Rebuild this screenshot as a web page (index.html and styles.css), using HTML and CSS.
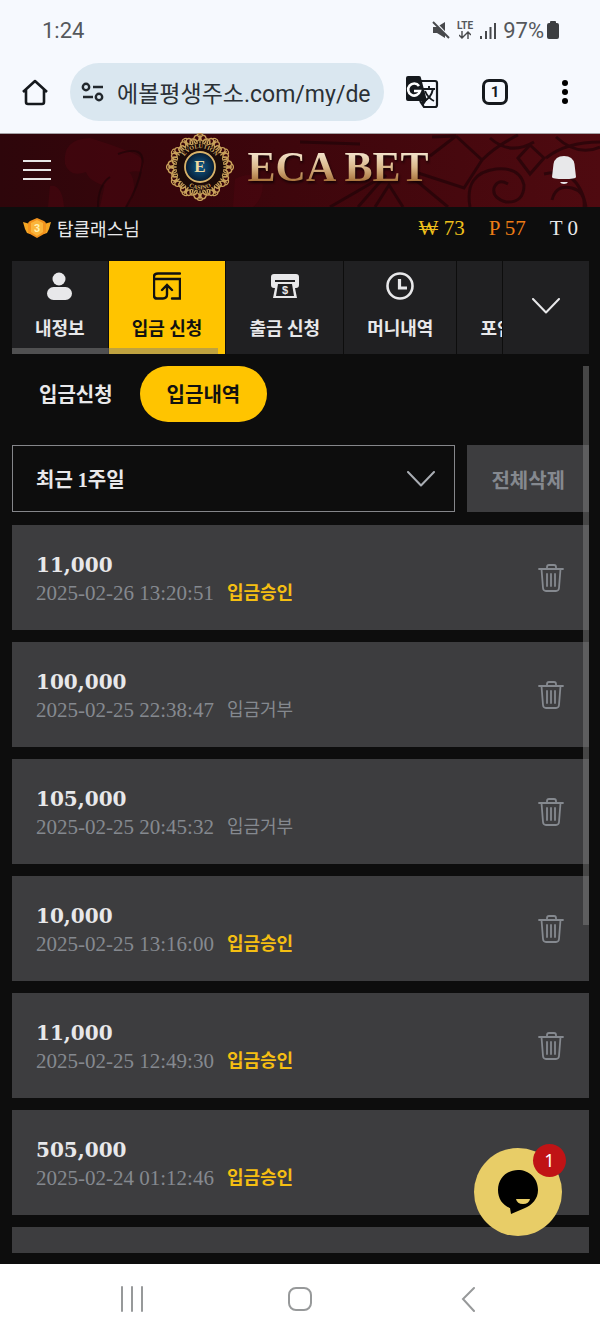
FILE: index.html
```
<!DOCTYPE html>
<html lang="ko">

<head>
    <meta charset="UTF-8">
    <meta name="viewport" content="width=device-width, initial-scale=1.0">
    <title>ECA BET</title>
    <link rel="stylesheet" href="styles.css">
</head>

<body>
    <!-- icons used more than once -->
    <svg width="0" height="0" class="sprite" aria-hidden="true">
        <symbol id="trash" viewBox="0 0 26 28">
            <path d="M1 5h24M9 5V3q0-2 2-2h5q2 0 2 2v2M3.500 5l1.500 19q.3 3 3 3h10q2.700 0 3-3l1.500-19M9 10v12M13 10v12M17 10v12" fill="none" stroke="currentColor" stroke-width="1.800" stroke-linecap="round" />
        </symbol>
        <symbol id="down" viewBox="0 0 28 16">
            <path d="M1 1l13 13.500L27 1" fill="none" stroke="currentColor" stroke-width="2" stroke-linecap="round" stroke-linejoin="round" />
        </symbol>
        <symbol id="flourish" viewBox="0 0 22 13">
            <path d="M11 12V2M11 12C7 12 4 9 5 5s6-3 5 1-4 1-3 0M11 12c4 0 7-3 6-7s-6-3-5 1 4 1 3 0M8 2q3-3 6 0M5 6Q1 5 1 9t4 2M17 6q4-1 4 3t-4 2" fill="none" stroke="#c8a05a" stroke-width="1.300" />
        </symbol>
    </svg>

    <div class="phone-top">
        <div class="status">
            <time>1:24</time>
            <div class="status-icons">
                <svg class="mute" width="18" height="18" viewBox="0 0 18 18">
                    <path d="M1 6h4l8-5v16l-8-5H1z" fill="#47494c" />
                    <path d="M2 0l16 17" stroke="#f6f9fe" stroke-width="2" />
                    <path d="M1 1l16 16" stroke="#47494c" stroke-width="2" />
                </svg>
                <div class="lte">
                    <span>LTE</span>
                    <svg width="12" height="8" viewBox="0 0 12 8">
                        <path d="M3 0v7M0 4l3 3 3-3M9 8V1M6 4l3-3 3 3" fill="none" stroke="#47494c" stroke-width="1.400" />
                    </svg>
                </div>
                <svg width="16" height="17" viewBox="0 0 16 17">
                    <path d="M1 14v3M6 9v8M10.500 5v12M15 1v16" stroke="#47494c" stroke-width="2" />
                </svg>
                <span class="percent">97%</span>
                <svg width="12" height="18" viewBox="0 0 12 18">
                    <path d="M3 2V1q0-1 1-1h4q1 0 1 1v1h1q2 0 2 2v12q0 2-2 2H2q-2 0-2-2V4q0-2 2-2z" fill="#3c3e41" />
                </svg>
            </div>
        </div>
        <div class="browser">
            <button aria-label="Home">
                <svg width="28" height="28" viewBox="0 0 28 28">
                    <path d="M2 14L14 3l12 11M5 12v12q0 2 2 2h14q2 0 2-2V12" fill="none" stroke="#15191d" stroke-width="2.600" stroke-linejoin="round" />
                </svg>
            </button>
            <label class="address">
                <svg width="24" height="20" viewBox="0 0 24 20">
                    <path d="M12 5h10M2 15h10" stroke="#22282d" stroke-width="2.400" />
                    <circle cx="5" cy="5" r="3.200" fill="none" stroke="#22282d" stroke-width="2.400" />
                    <circle cx="18" cy="15" r="3.200" fill="none" stroke="#22282d" stroke-width="2.400" />
                </svg>
                <input type="text" value="에볼평생주소.com/my/de" aria-label="Address">
            </label>
            <div class="browser-tools">
                <button aria-label="Translate">
                    <svg width="34" height="34" viewBox="0 0 34 34">
                        <path d="M15 6h15q2 0 2 2v22q0 2-2 2H19l-4-6" fill="#f6f9fe" stroke="#15191d" stroke-width="2.200" />
                        <path d="M3 1h11q2 0 2 2l6 23H3q-2 0-2-2V3q0-2 2-2zM16 25h6l-4 6z" fill="#15191d" />
                        <path d="M14 11a6 6 0 1 0 1 5H9" fill="none" stroke="#fff" stroke-width="2.600" />
                        <path d="M18 14h12M24 11v3M28 14q-2 9-9 12M20 16q3 7 9 10" fill="none" stroke="#15191d" stroke-width="1.900" />
                    </svg>
                </button>
                <button class="tabs-count" aria-label="Open tabs">1</button>
                <button aria-label="Menu">
                    <svg width="8" height="26" viewBox="0 0 8 26">
                        <circle cx="4" cy="4" r="3" />
                        <circle cx="4" cy="13" r="3" />
                        <circle cx="4" cy="22" r="3" />
                    </svg>
                </button>
            </div>
        </div>
    </div>

    <header class="banner">
        <svg class="pattern" viewBox="0 0 600 73" preserveAspectRatio="xMidYMid slice" aria-hidden="true">
            <defs>
                <linearGradient id="red">
                    <stop offset="0" stop-color="#2e060b" />
                    <stop offset=".3" stop-color="#38050b" />
                    <stop offset=".65" stop-color="#43070d" />
                    <stop offset="1" stop-color="#4f0a10" />
                </linearGradient>
            </defs>
            <path d="M0 0h600v73H0z" fill="url(#red)" />
            <g fill="#4c0610" opacity=".5">
                <path d="M65 30Q62 5 90 4q20 6 40 14 18 6 12 20-20-4-26 16-26-4-30-16-16 6-21-8z" />
                <path d="M105 50q20-28 28-5 4 20-8 28h-25zM50 52q12-2 14 21H48zM235 45q20-10 28 5 0 15-10 23h-20z" />
            </g>
            <g fill="none" stroke="#1b0307" stroke-width="3" opacity=".6">
                <path d="M118 20q28-10 24 12t-16 41M98 73q0-22 12-30" stroke-width="2" />
                <path d="M330 73l52-30M358 73l28-32M375 73l14-22 14 22M412 43l36 30M412 37l52 17 18-28-26-24M430 22l26-20M432 3l24-1M482 26q14-14 36-25M300 8l60 2" />
                <path d="M470 73q-6-34 26-38 24-2 28 16 0 18-18 17-14-4-12-14 4-10 14-4M518 24l12-13 14 13-14 16zM490 4q20 18 44 4M546 24q20-16 54-16M544 40q34-8 42 33M552 66q4-16 20-12 14 4 12 19M556 3q22 20 44 10" />
            </g>
        </svg>
        <button class="hamburger" aria-label="메뉴">
            <svg width="28" height="22" viewBox="0 0 28 22">
                <path d="M0 2h28M0 11h28M0 20h28" stroke="#e8e6e6" stroke-width="2" />
            </svg>
        </button>
        <a class="brand" href="#">
            <svg width="68" height="68" viewBox="0 0 68 68" aria-hidden="true">
                <defs>
                    <radialGradient id="blue">
                        <stop offset="0" stop-color="#0f5c8c" />
                        <stop offset="1" stop-color="#061a30" />
                    </radialGradient>
                    <path id="arcTop" d="M15 34a19 19 0 0 1 38 0" />
                    <path id="arcBottom" d="M11.500 34a22.500 22.500 0 0 0 45 0" />
                </defs>
                <circle cx="34" cy="34" r="27" fill="#1c0a08" />
                <g id="quarter">
                    <use href="#flourish" x="23" y="0" width="22" height="13" />
                    <use href="#flourish" x="23" y="1" width="22" height="13" transform="rotate(30 34 34)" />
                    <use href="#flourish" x="23" y="1" width="22" height="13" transform="rotate(60 34 34)" />
                </g>
                <use href="#quarter" transform="rotate(90 34 34)" />
                <use href="#quarter" transform="rotate(180 34 34)" />
                <use href="#quarter" transform="rotate(270 34 34)" />
                <circle cx="34" cy="34" r="23.500" fill="#1c0a08" />
                <circle cx="34" cy="34" r="15" fill="url(#blue)" stroke="#d8b36a" stroke-width="1.800" />
                <text class="ring"><textPath href="#arcTop" startOffset="50%">EVOLUTION</textPath></text>
                <text class="ring"><textPath href="#arcBottom" startOffset="50%">CASINO</textPath></text>
                <text class="letter" x="34" y="39">E</text>
            </svg>
            <span>ECA BET</span>
        </a>
        <button class="bell" aria-label="알림">
            <svg width="26" height="28" viewBox="0 0 26 28">
                <path d="M13 0q9 0 10.500 8L25 21q0 2-12 2T1 21L2.500 8Q4 0 13 0zM9 26h8q-1 2-4 2t-4-2z" fill="#e8e8ea" />
            </svg>
        </button>
    </header>

    <div class="user">
        <div class="user-name">
            <svg width="28" height="20" viewBox="0 0 28 20">
                <path d="M0 4l7 2v10l-3-1-2-4zM28 4l-7 2v10l3-1 2-4z" fill="#f5a623" />
                <path d="M14 0l7 3q2 1 2 3v7q0 2-2 3l-7 4-7-4q-2-1-2-3V6q0-2 2-3z" fill="#f2921d" />
                <path d="M14 2l6 3v9l-6 4-6-4V5z" fill="#fbb53a" />
                <text class="rank" x="14" y="14">3</text>
            </svg>
            <span>탑클래스님</span>
        </div>
        <ul class="wallet">
            <li class="won">₩ 73</li>
            <li class="point">P 57</li>
            <li>T 0</li>
        </ul>
    </div>

    <main>
        <nav class="menu">
            <div class="menu-scroll">
                <a href="#">
                    <svg width="28" height="28" viewBox="0 0 28 28" fill="currentColor">
                        <circle cx="13" cy="7" r="6.500" />
                        <rect x="1" y="15" width="25" height="13" rx="6.500" />
                    </svg>
                    내정보
                </a>
                <a href="#" class="active">
                    <svg width="28" height="28" viewBox="0 0 28 28" fill="none" stroke="currentColor" stroke-width="2.400" stroke-linecap="round">
                        <path d="M27 1.500H5q-4 0-4 3v19q0 3 3 3h6q4 0 4-4V14M9 18l5-5 5 5M1.500 7H27v19.500h-8" />
                    </svg>
                    입금 신청
                </a>
                <a href="#">
                    <svg width="28" height="28" viewBox="0 0 28 28">
                        <path d="M3 2h22q3 0 3 3v8q0 3-3 3h-1l2 10H2l2-10H3q-3 0-3-3V5q0-3 3-3z" fill="currentColor" />
                        <path d="M4 8h20v2H4zM7 12h14l2 12H5z" fill="#202022" />
                        <text class="dollar" x="14" y="22">$</text>
                    </svg>
                    출금 신청
                </a>
                <a href="#">
                    <svg width="28" height="28" viewBox="0 0 28 28" fill="none" stroke="currentColor" stroke-width="2.600">
                        <circle cx="14" cy="14" r="12.500" />
                        <path d="M13.500 7v9H21" stroke-width="3.200" />
                    </svg>
                    머니내역
                </a>
                <a href="#">
                    <svg width="28" height="28"></svg>
                    포인트
                </a>
            </div>
            <button class="menu-more" aria-label="더보기">
                <svg width="28" height="16"><use href="#down" /></svg>
            </button>
        </nav>

        <section class="content">
            <div class="sub-menu">
                <a href="#">입금신청</a>
                <a href="#" class="active">입금내역</a>
            </div>

            <div class="filter">
                <label class="period">
                    <select aria-label="기간">
                        <option>최근 1주일</option>
                    </select>
                    <svg width="28" height="16"><use href="#down" /></svg>
                </label>
                <button class="delete-all">전체삭제</button>
            </div>

            <ul class="history">
                <li>
                    <div>
                        <strong>11,000</strong>
                        <p><time>2025-02-26 13:20:51</time><span class="ok">입금승인</span></p>
                    </div>
                    <button aria-label="삭제"><svg width="26" height="28"><use href="#trash" /></svg></button>
                </li>
                <li>
                    <div>
                        <strong>100,000</strong>
                        <p><time>2025-02-25 22:38:47</time><span>입금거부</span></p>
                    </div>
                    <button aria-label="삭제"><svg width="26" height="28"><use href="#trash" /></svg></button>
                </li>
                <li>
                    <div>
                        <strong>105,000</strong>
                        <p><time>2025-02-25 20:45:32</time><span>입금거부</span></p>
                    </div>
                    <button aria-label="삭제"><svg width="26" height="28"><use href="#trash" /></svg></button>
                </li>
                <li>
                    <div>
                        <strong>10,000</strong>
                        <p><time>2025-02-25 13:16:00</time><span class="ok">입금승인</span></p>
                    </div>
                    <button aria-label="삭제"><svg width="26" height="28"><use href="#trash" /></svg></button>
                </li>
                <li>
                    <div>
                        <strong>11,000</strong>
                        <p><time>2025-02-25 12:49:30</time><span class="ok">입금승인</span></p>
                    </div>
                    <button aria-label="삭제"><svg width="26" height="28"><use href="#trash" /></svg></button>
                </li>
                <li>
                    <div>
                        <strong>505,000</strong>
                        <p><time>2025-02-24 01:12:46</time><span class="ok">입금승인</span></p>
                    </div>
                </li>
                <li></li>
            </ul>
            <div class="scrollbar"></div>
        </section>

        <button class="chat" aria-label="채팅">
            <svg width="42" height="46" viewBox="0 0 42 46">
                <path d="M21 1c11 0 20 8 20 20 0 9-6 15-13 18L14 45l-1-6C5 36 1 29 1 21 1 9 10 1 21 1z" />
                <path d="M19 30h14q-1 5-7 5t-7-5z" fill="#e8cd67" />
            </svg>
            <span class="badge">1</span>
        </button>
    </main>

    <footer>
        <button aria-label="Recent apps">
            <svg width="24" height="26" viewBox="0 0 24 26">
                <path d="M2 1v24M12 1v24M22 1v24" />
            </svg>
        </button>
        <button aria-label="Home">
            <svg width="24" height="26" viewBox="0 0 24 26">
                <rect x="1" y="2" width="22" height="22" rx="7" />
            </svg>
        </button>
        <button aria-label="Back">
            <svg width="24" height="26" viewBox="0 0 24 26">
                <path d="M18 2L7 13l11 12" />
            </svg>
        </button>
    </footer>
</body>

</html>
```
FILE: styles.css
```
:root {
    --dark: #0d0d0d;
    --tab: #202022;
    --card: #3d3d3f;
    --light: #e8e8ea;
    --grey: #85898f;
    --yellow: #ffc400;
    --phone: #f6f9fe;
}

* {
    box-sizing: border-box;
}

body {
    margin: 0;
    height: 100vh;
    display: flex;
    flex-direction: column;
    background-color: var(--dark);
    color: var(--light);
    font-family: "Liberation Serif", "Noto Sans CJK KR", serif;
    font-size: 18px;
}

button {
    padding: 0;
    border: 0;
    background: none;
    color: inherit;
    font: inherit;
    cursor: pointer;
}

a {
    color: inherit;
    text-decoration: none;
}

ul {
    margin: 0;
    padding: 0;
    list-style: none;
}

svg {
    display: block;
    flex: none;
}

.sprite {
    position: absolute;
}

/* phone status bar and browser bar */
.phone-top {
    flex: none;
    height: 134px;
    background-color: var(--phone);
    border-bottom: 1px solid #a5a3a6;
    font-family: Roboto, "Noto Sans CJK KR", sans-serif;
}

.status {
    display: flex;
    justify-content: space-between;
    align-items: center;
    height: 60px;
    padding: 0 41px 0 42px;
    color: #55585c;
    font-size: 22px;
}

.status-icons {
    display: flex;
    align-items: center;
    gap: 7px;
}

.percent {
    margin-right: -4px;
}

.lte {
    display: flex;
    flex-direction: column;
    align-items: center;
    font-size: 10px;
    font-weight: bold;
    line-height: 10px;
}

.browser {
    display: flex;
    align-items: center;
    gap: 21px;
    height: 64px;
    padding: 0 31px 0 21px;
}

.address {
    display: flex;
    align-items: center;
    gap: 12px;
    flex: 1;
    min-width: 0;
    height: 58px;
    padding: 0 10px 0 11px;
    border-radius: 29px;
    background-color: #dae7f0;
}

.address input {
    flex: 1;
    min-width: 0;
    padding: 0;
    border: 0;
    outline: 0;
    background: none;
    color: #2b3136;
    font: inherit;
    font-size: 23px;
}

.browser-tools {
    flex: none;
    display: flex;
    align-items: center;
    justify-content: space-between;
    width: 164px;
}

.browser-tools .tabs-count {
    width: 26px;
    height: 26px;
    margin-right: 10px;
    border: 3px solid #15191d;
    border-radius: 7px;
    color: #15191d;
    font-size: 15px;
    font-weight: bold;
    line-height: 20px;
}

/* banner */
.banner {
    position: relative;
    flex: none;
    display: flex;
    align-items: center;
    justify-content: space-between;
    height: 73px;
    padding: 0 23px;
}

.pattern {
    position: absolute;
    inset: 0;
    width: 100%;
    height: 100%;
}

.banner button,
.brand {
    position: relative;
}

.banner button {
    margin-bottom: 2px;
}

.brand {
    display: flex;
    align-items: center;
    gap: 14px;
    height: 68px;
    margin-right: 8px;
    margin-bottom: 8px;
}

.brand span {
    background: linear-gradient(#f3e3cc 20%, #dcb98c 50%, #a8713a 80%);
    background-clip: text;
    -webkit-background-clip: text;
    color: transparent;
    font-size: 42px;
    font-weight: bold;
    line-height: 48px;
    filter: drop-shadow(1px 2px 1px #150205);
}

.ring {
    fill: #d8b36a;
    font-size: 6px;
    font-weight: bold;
    text-anchor: middle;
}

.letter {
    fill: #edd9a0;
    font-size: 17px;
    font-weight: bold;
    text-anchor: middle;
}

/* user line */
.user {
    flex: none;
    display: flex;
    align-items: center;
    justify-content: space-between;
    height: 42px;
    padding: 0 22px 0 23px;
}

.user-name {
    display: flex;
    align-items: center;
    gap: 6px;
}

.rank {
    fill: #fff0b0;
    font-family: "Liberation Sans", sans-serif;
    font-size: 11px;
    font-weight: bold;
    text-anchor: middle;
}

.wallet {
    display: flex;
    gap: 24px;
    font-size: 21px;
}

.won {
    color: #f0c01c;
}

.point {
    color: #ee7d16;
}

/* main menu */
main {
    position: relative;
    flex: 1;
    min-height: 0;
    display: flex;
    flex-direction: column;
    gap: 12px;
    padding: 12px 11px 11px 12px;
}

.menu {
    flex: none;
    display: flex;
    height: 93px;
}

.menu-scroll {
    position: relative;
    flex: 1;
    min-width: 0;
    display: flex;
    gap: 1px;
    overflow: hidden;
}

.menu a {
    flex: none;
    display: flex;
    flex-direction: column;
    align-items: center;
    gap: 16px;
    padding: 11px 23px 0;
    background-color: var(--tab);
    font-weight: bold;
    line-height: 26px;
}

.menu .active {
    background-color: var(--yellow);
    color: #111;
}

/* horizontal scroll thumb */
.menu-scroll::after {
    content: "";
    position: absolute;
    left: 0;
    bottom: 0;
    width: 42%;
    height: 6px;
    background-color: rgba(128, 128, 128, 0.5);
}

.menu-more {
    display: flex;
    align-items: center;
    justify-content: center;
    width: 86px;
    margin-left: 1px;
    padding-bottom: 4px;
    background-color: var(--tab);
}

.dollar {
    fill: var(--light);
    font-family: "Liberation Sans", sans-serif;
    font-size: 11px;
    font-weight: bold;
    text-anchor: middle;
}

/* deposit history */
.content {
    position: relative;
    flex: 1;
    min-height: 0;
    overflow: hidden;
    font-size: 20px;
}

.sub-menu {
    display: flex;
    font-weight: bold;
}

.sub-menu a {
    padding: 2px 27px 0;
    border-radius: 28px;
    line-height: 54px;
}

.sub-menu .active {
    background-color: var(--yellow);
    color: #111;
}

.filter {
    display: flex;
    gap: 12px;
    height: 67px;
    margin: 23px 0 13px;
}

.period {
    flex: 1;
    display: grid;
    align-items: center;
    color: #a9adb3;
}

.period select,
.period svg {
    grid-area: 1 / 1;
}

.period select {
    height: 100%;
    padding: 2px 23px 0;
    appearance: none;
    border: 1px solid #85868a;
    border-radius: 0;
    background: none;
    color: var(--light);
    font: inherit;
    font-weight: bold;
}

.period svg {
    justify-self: end;
    margin-right: 20px;
    pointer-events: none;
}

.delete-all {
    padding: 2px 24px 0;
    background-color: var(--card);
    color: var(--grey);
    font-weight: bold;
}

.history {
    display: flex;
    flex-direction: column;
    gap: 12px;
}

.history li {
    display: flex;
    align-items: center;
    justify-content: space-between;
    height: 105px;
    padding: 0 25px 0 24px;
    background-color: var(--card);
    color: var(--grey);
}

.history strong {
    display: block;
    padding-top: 4px;
    color: var(--light);
    font-family: "DejaVu Serif", serif;
    line-height: 26px;
}

.history p {
    display: flex;
    gap: 13px;
    margin: 0;
    font-size: 18px;
    line-height: 30px;
}

.history time {
    font-size: 21px;
}

.history .ok {
    color: #f5bf12;
    font-weight: bold;
}

.scrollbar {
    position: absolute;
    top: 0;
    right: 0;
    width: 6px;
    height: 63%;
    background-color: rgba(128, 128, 128, 0.5);
}

/* chat bubble over the list */
.chat {
    position: absolute;
    right: 38px;
    bottom: 28px;
    display: flex;
    align-items: center;
    justify-content: center;
    width: 88px;
    height: 88px;
    border-radius: 50%;
    background-color: #e8cd67;
}

.badge {
    position: absolute;
    top: -4px;
    right: -4px;
    width: 33px;
    border-radius: 50%;
    background-color: #c01315;
    color: #fff;
    font-family: "Noto Sans", sans-serif;
    line-height: 33px;
}

/* phone navigation */
footer {
    flex: none;
    display: flex;
    align-items: center;
    justify-content: space-around;
    height: 70px;
    padding: 0 48px;
    background-color: #fff;
}

footer svg {
    fill: none;
    stroke: #97999a;
    stroke-width: 2;
    stroke-linecap: round;
}
```
